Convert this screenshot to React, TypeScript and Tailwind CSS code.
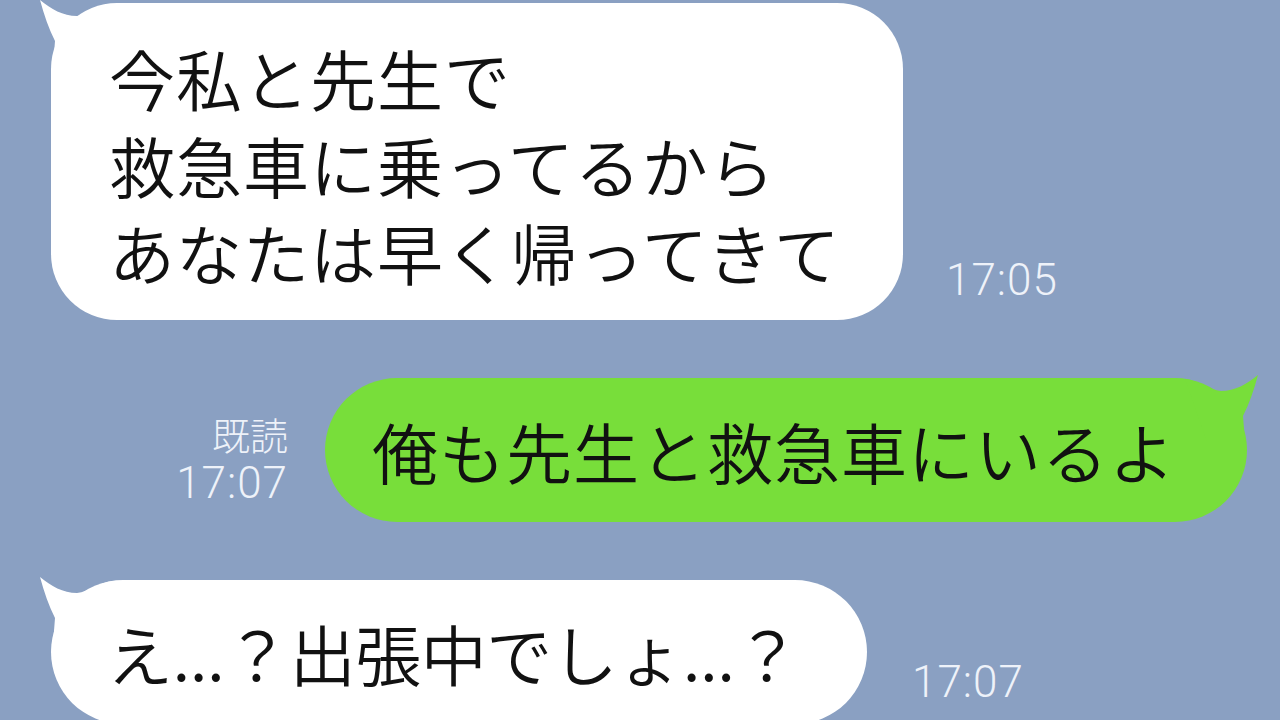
import React from "react";

const jp = "font-['Noto_Sans_CJK_JP',sans-serif] text-[#111] font-[350]";
const time = "font-['Roboto',sans-serif] font-light text-[#eef2f9] text-[44px] leading-none tracking-[1px]";

// the little curved horn at the top corner of a LINE bubble
function Tail({ color, flip }: { color: string; flip?: boolean }) {
  return (
    <svg
      className={flip ? "absolute -right-[14px] -top-[6px] -scale-x-100" : "absolute -left-[14px] -top-[6px]"}
      width="80"
      height="70"
      viewBox="-14 -6 80 70"
    >
      <path
        d="M -11 -3 C -7 12, -2 26, 4 38 L 2 64 L 40 64 L 62 1 C 48 2, 38 12, 26 13 C 12 13, 0 6, -11 -3 Z"
        fill={color}
      />
    </svg>
  );
}

export default function App() {
  return (
    <div className="flex flex-col w-[1280px] h-[720px] overflow-hidden bg-[#8aa0c2]">
      {/* received */}
      <div className="flex items-end pl-[51px] pt-[3px]">
        <div className={`relative w-[852px] h-[317px] shrink-0 rounded-[66px] bg-white pl-[58px] pt-[31px] text-[66px] leading-[87px] tracking-[1px] ${jp}`}>
          <Tail color="#ffffff" />
          <div className="relative">今私と先生で</div>
          <div className="relative">救急車に乗ってるから</div>
          <div className="relative">あなたは早く帰ってきて</div>
        </div>
        <div className={`ml-[43px] mb-[18px] ${time}`}>17:05</div>
      </div>

      {/* sent */}
      <div className="flex items-end justify-end mt-[58px] pr-[33px]">
        <div className="flex flex-col items-end mr-[37px] mb-[17px]">
          <div className="text-[38px] leading-none text-[#eef2f9] font-['Noto_Sans_CJK_JP',sans-serif] font-light">既読</div>
          <div className={`mt-[8px] ${time}`}>17:07</div>
        </div>
        <div className={`relative w-[922px] h-[144px] shrink-0 rounded-[72px] bg-[#78de3a] flex items-center pl-[47px] text-[66px] leading-none tracking-[1px] ${jp}`}>
          <Tail color="#78de3a" flip />
          <span className="relative">俺も先生と救急車にいるよ</span>
        </div>
      </div>

      {/* received */}
      <div className="flex items-end pl-[51px] mt-[58px]">
        <div className={`relative w-[816px] h-[144px] shrink-0 rounded-[72px] bg-white flex items-center pl-[56px] text-[66px] leading-none tracking-[-0.5px] ${jp}`}>
          <Tail color="#ffffff" />
          <span className="relative">え...？出張中でしょ...？</span>
        </div>
        <div className={`ml-[45px] mb-[20px] ${time}`}>17:07</div>
      </div>
    </div>
  );
}
